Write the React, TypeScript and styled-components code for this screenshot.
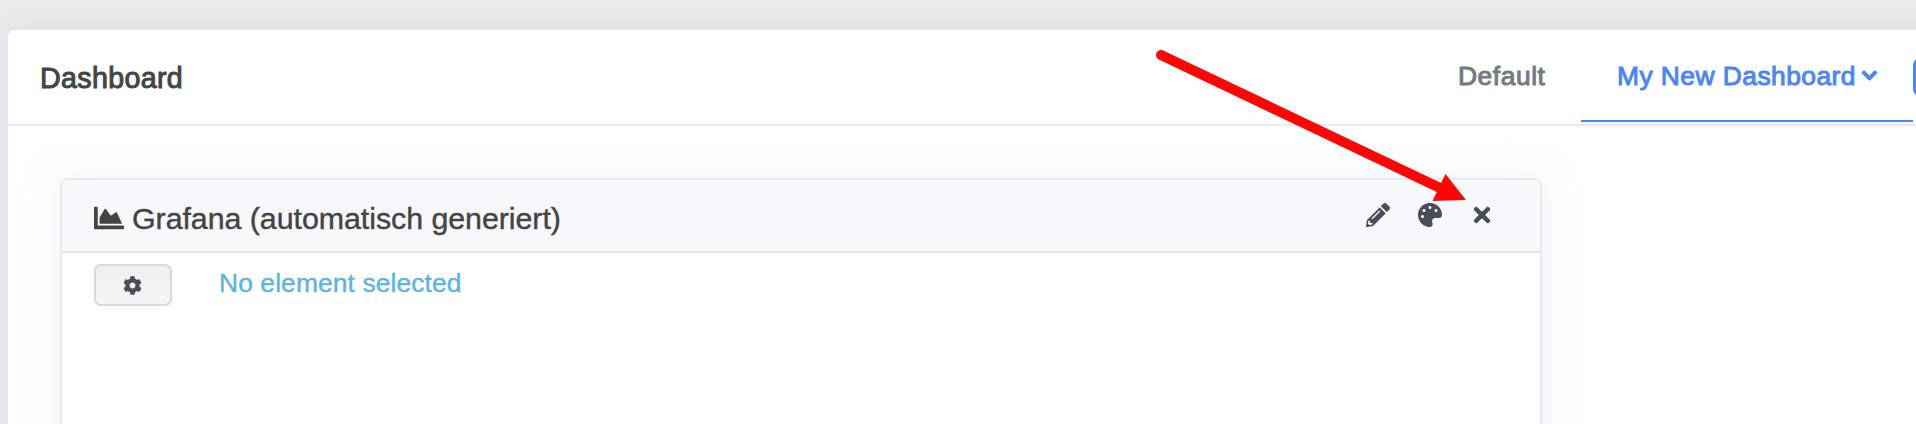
import React from "react";
import styled, { createGlobalStyle } from "styled-components";
import {
  FaAngleDown,
  FaChartArea,
  FaCog,
  FaPalette,
  FaPencilAlt,
  FaTimes,
} from "react-icons/fa";

const GlobalStyle = createGlobalStyle`
  * { box-sizing: border-box; }
  body {
    margin: 0;
    background: #ebedec;
    font-family: "Liberation Sans", Arial, sans-serif;
    overflow: hidden;
  }
`;

const Page = styled.div`
  position: relative;
  height: 424px;
  overflow: hidden;
  padding: 28px 0 0 6px;
`;

const Card = styled.main`
  width: 1980px;
  height: 500px;
  background: #fff;
  border: 2px solid #e6e7e8;
  border-radius: 8px;
  background-clip: padding-box;
  box-shadow: 0 0 34px rgba(210, 214, 226, 0.75);
`;

const Header = styled.header`
  display: flex;
  height: 96px;
  border-bottom: 2px solid #ebebeb;
  padding-left: 32px;
`;

const Title = styled.h1`
  margin: 0;
  width: 1370px;
  padding-top: 1px;
  font-size: 28.6px;
  line-height: 94px;
  font-weight: 400;
  letter-spacing: 0.35px;
  color: #444;
  -webkit-text-stroke: 1px #444;
`;

const Tabs = styled.nav`
  display: flex;
  align-items: flex-start;
`;

const Tab = styled.a<{ $active?: boolean }>`
  display: flex;
  align-items: center;
  height: 92px;
  padding: 3px 36px 0 ${(p) => (p.$active ? 36 : 48)}px;
  width: ${(p) => (p.$active ? 332 : 171)}px;
  font-size: 26.4px;
  letter-spacing: ${(p) => (p.$active ? 0.45 : 0.55)}px;
  white-space: nowrap;
  color: ${(p) => (p.$active ? "#4e86ee" : "#727b82")};
  -webkit-text-stroke: 1px currentColor;
  border-bottom: 2px solid ${(p) => (p.$active ? "#4e86ee" : "transparent")};

  svg {
    flex: none;
    margin: -2px 0 0 1px;
    stroke: none;
  }
`;

const AddButton = styled.button`
  width: 60px;
  height: 38px;
  margin-top: 28px;
  border: 0;
  border-radius: 7px;
  background: #4e86ee;
`;

const Panel = styled.section`
  width: 1482px;
  height: 420px;
  margin: 52px 0 0 52px;
  border: 2px solid #e8e9eb;
  border-radius: 8px;
  background: #fff;
  box-shadow: 0 0 32px rgba(218, 227, 245, 0.5);
`;

const PanelHeader = styled.div`
  display: flex;
  align-items: center;
  justify-content: space-between;
  height: 73px;
  padding: 0 46px 0 32px;
  background: #f7f8fb;
  border-bottom: 2px solid #e4e5e7;
  border-radius: 6px 6px 0 0;
`;

const PanelTitle = styled.h2`
  display: flex;
  align-items: center;
  gap: 8px;
  margin: 5px 0 0;
  font-size: 30.4px;
  font-weight: 400;
  letter-spacing: -0.06px;
  color: #444;
  -webkit-text-stroke: 0.4px #444;

  svg {
    stroke: none;
  }
`;

const Actions = styled.div`
  display: flex;
  align-items: center;
  gap: 28px;
  margin-bottom: 1px;
  color: #494d57;
`;

const PanelBody = styled.div`
  display: flex;
  align-items: flex-start;
  gap: 47px;
  padding: 11px 32px;
`;

const SettingsButton = styled.button`
  display: flex;
  align-items: center;
  justify-content: center;
  width: 78px;
  height: 42px;
  padding: 0 1px 0 0;
  color: #4b5058;
  border: 2px solid #d9d9d9;
  border-radius: 7px;
  background: linear-gradient(#efefef, #f5f5f5);
`;

const Message = styled.span`
  font-size: 26.4px;
  line-height: 38px;
  letter-spacing: 0.1px;
  color: #5bb5de;
  -webkit-text-stroke: 0.4px #5bb5de;
`;

const Pointer = styled.svg`
  position: absolute;
  left: 0;
  top: 0;
  pointer-events: none;
`;

export default function App() {
  return (
    <Page>
      <GlobalStyle />
      <Card>
        <Header>
          <Title>Dashboard</Title>
          <Tabs>
            <Tab>Default</Tab>
            <Tab $active>
              My New Dashboard
              <FaAngleDown size={25} />
            </Tab>
            <AddButton aria-label="Add" />
          </Tabs>
        </Header>
        <Panel>
          <PanelHeader>
            <PanelTitle>
              <FaChartArea size={30} />
              Grafana (automatisch generiert)
            </PanelTitle>
            <Actions>
              <FaPencilAlt size={24} />
              <FaPalette size={24} />
              <FaTimes size={24} />
            </Actions>
          </PanelHeader>
          <PanelBody>
            <SettingsButton aria-label="Settings">
              <FaCog size={19} />
            </SettingsButton>
            <Message>No element selected</Message>
          </PanelBody>
        </Panel>
      </Card>
      <Pointer width="1916" height="424" viewBox="0 0 1916 424">
        <path d="M1161 55 L1440 188" stroke="#ff0505" strokeWidth="10" strokeLinecap="round" />
        <path d="M1445.5 174 L1466 200 L1432.5 201 Z" fill="#ff0505" />
      </Pointer>
    </Page>
  );
}
